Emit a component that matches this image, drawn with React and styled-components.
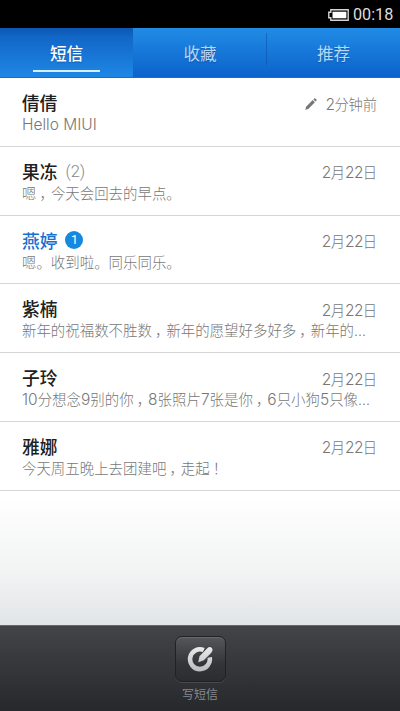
import React from "react";
import styled, { createGlobalStyle } from "styled-components";

const GlobalStyle = createGlobalStyle`
  * { box-sizing: border-box; }
  body { margin: 0; background: #000; }
`;

const Screen = styled.div`
  width: 400px;
  height: 711px;
  display: flex;
  flex-direction: column;
  overflow: hidden;
  font-family: "Noto Sans CJK SC", sans-serif;
  background: #fff;
`;

const StatusBar = styled.header`
  height: 28px;
  flex: none;
  display: flex;
  justify-content: flex-end;
  align-items: center;
  gap: 4px;
  padding: 2px 7px 0 0;
  background: #000;
  color: #dedede;
`;

const Clock = styled.span`
  font: 400 16.2px/20px Roboto, sans-serif;
  width: 40px;
  white-space: nowrap;
`;

const Tabs = styled.nav`
  height: 50px;
  flex: none;
  display: grid;
  grid-template-columns: 133px 134px 133px;
  background: linear-gradient(#218be5, #0b63cb);
  border-bottom: 1px solid #1c6dcb;
`;

const Tab = styled.button`
  border: 0;
  padding: 7px 0 0;
  display: flex;
  flex-direction: column;
  align-items: center;
  font: 500 16.6px/36px "Noto Sans CJK SC", sans-serif;
  color: ${(p) => (p.$active ? "#fff" : "#b5d8f6")};
  font-weight: ${(p) => (p.$active ? 500 : 400)};
  text-shadow: 0 1px 1px rgba(0, 40, 110, 0.35);
  background: ${(p) =>
    p.$active
      ? "linear-gradient(#0d57b2 0, #1268c9 10px, #1e87e5 100%)"
      : p.$divided
        ? "linear-gradient(rgba(6, 70, 160, 0.45), rgba(6, 70, 160, 0.45)) right 5px / 1px 32px no-repeat"
        : "none"};

  &::after {
    content: "";
    width: 67px;
    height: 2px;
    margin-top: -1px;
    background: ${(p) => (p.$active ? "#d5efff" : "transparent")};
  }
`;

const List = styled.main`
  flex: 1;
  display: flex;
  flex-direction: column;
  background: linear-gradient(#fff 0, #fff 420px, #f1f2f2 500px, #e1e5e7 547px);
`;

const Row = styled.article`
  height: 68.8px;
  flex: none;
  padding: 12px 23px 0 22px;
  border-bottom: 1px solid #d6d6d6;
  background: #fff;
`;

const Heading = styled.div`
  height: 24px;
  display: flex;
  align-items: center;
`;

const Name = styled.span`
  font-size: 17.7px;
  line-height: 24px;
  font-weight: 500;
  color: ${(p) => (p.$unread ? "#1771ce" : "#202020")};
`;

const Count = styled.span`
  margin: 3px 0 0 8px;
  font: 300 16.5px/20px Roboto, sans-serif;
  color: #888;
`;

const Badge = styled.span`
  width: 18px;
  height: 18px;
  margin-left: 8px;
  display: grid;
  place-items: center;
  border-radius: 50%;
  background: #1588e2;
  color: #fff;
  font: 400 12.5px/18px Roboto, sans-serif;
`;

const When = styled.time`
  margin: 3px 0 0 auto;
  display: flex;
  align-items: center;
  gap: 8px;
  font-size: 14.3px;
  line-height: 20px;
  font-weight: 300;
  color: #777;
  letter-spacing: -0.1px;
`;

const Preview = styled.p`
  margin: -2px 0 0;
  font-size: 14.45px;
  line-height: 24px;
  font-weight: 300;
  color: #777;
  white-space: nowrap;
`;

const Latin = styled.span`
  font-family: Inter, sans-serif;
  font-size: ${(p) => (p.$dots ? "14px" : "15.5px")};
  font-weight: 300;
  line-height: 1;

  ${When} & {
    letter-spacing: -0.6px;
  }
`;

const Punctuation = styled.span`
  display: inline-block;
  padding-left: 3px;
  width: 14.45px;
  font-feature-settings: "halt";
  line-height: 1;
`;

const Footer = styled.footer`
  height: 86px;
  flex: none;
  display: flex;
  flex-direction: column;
  align-items: center;
  padding-top: 10px;
  border-top: 1px solid #66696b;
  background: linear-gradient(#424448, #27282b);
`;

const Compose = styled.button`
  width: 51px;
  height: 46px;
  padding: 0;
  display: grid;
  place-items: center;
  border: 1px solid #202124;
  border-radius: 7px;
  background: linear-gradient(#55575a, #343538 60%, #2b2c2f);
  box-shadow: inset 0 1px 0 #68696c, 0 1px 0 #494a4d;
`;

const ComposeLabel = styled.span`
  margin-top: 3px;
  font-size: 12px;
  line-height: 18px;
  color: #88898c;
`;

function MixedText({ text }) {
  return text.split(/([\uFF0C\uFF01]|[A-Za-z0-9 ]+|…)/).filter(Boolean).map((part, i) => {
    if (/[\uFF0C\uFF01]/.test(part)) return <Punctuation key={i}>{part}</Punctuation>;
    if (part === "…") return <Latin key={i} $dots>...</Latin>;
    if (/^[A-Za-z0-9 ]+$/.test(part)) return <Latin key={i}>{part}</Latin>;
    return <React.Fragment key={i}>{part}</React.Fragment>;
  });
}

function BatteryIcon() {
  return (
    <svg width="21" height="12" viewBox="0 0 21 12" fill="none">
      <path d="M2.8.8H20.2V11.2H2.8V8.8H.8V3.2H2.8Z" stroke="#d6d6d6" strokeWidth="1.4" />
      <path d="M4.5 2.7H18.4V9.3H4.5Z" fill="#fff" />
    </svg>
  );
}

function PencilIcon() {
  return (
    <svg width="12" height="12" viewBox="0 0 12 12" fill="#777">
      <path d="M.3 11.7L1.1 8.7 7.7 2.1 9.9 4.3 3.3 10.9ZM8.4 1.4L9.2.6Q9.8 0 10.4.6L11.4 1.6Q12 2.2 11.4 2.8L10.6 3.6Z" />
    </svg>
  );
}

function ComposeIcon() {
  return (
    <svg width="26" height="26" viewBox="0 0 26 26" fill="none">
      <defs>
        <linearGradient id="silver" x1="0" y1="0" x2="0" y2="26" gradientUnits="userSpaceOnUse">
          <stop stopColor="#ededed" />
          <stop offset="1" stopColor="#b9babc" />
        </linearGradient>
      </defs>
      <path d="M16.8 4.1A9.9 9.9 0 1 0 22.7 11.4" stroke="url(#silver)" strokeWidth="4.6" />
      <path
        d="M11.3 16.3L12.5 10.3 20.3 2.3C21.8.8 23.5.7 24.7 1.8S25.8 5.1 24.3 6.7L16.8 14.2Z"
        fill="url(#silver)"
        stroke="#404245"
        strokeWidth="1.6"
        paintOrder="stroke"
      />
    </svg>
  );
}

const messages = [
  { name: "倩倩", text: "Hello MIUI", when: "2分钟前", draft: true },
  { name: "果冻", count: 2, text: "嗯\uFF0C今天会回去的早点。", when: "2月22日" },
  { name: "燕婷", unread: 1, text: "嗯。收到啦。同乐同乐。", when: "2月22日" },
  { name: "紫楠", text: "新年的祝福数不胜数\uFF0C新年的愿望好多好多\uFF0C新年的…", when: "2月22日" },
  { name: "子玲", text: "10分想念9别的你\uFF0C8张照片7张是你\uFF0C6只小狗5只像…", when: "2月22日" },
  { name: "雅娜", text: "今天周五晚上去团建吧\uFF0C走起\uFF01", when: "2月22日" },
];

export default function App() {
  return (
    <Screen>
      <GlobalStyle />
      <StatusBar>
        <BatteryIcon />
        <Clock>00:18</Clock>
      </StatusBar>
      <Tabs>
        <Tab $active>短信</Tab>
        <Tab $divided>收藏</Tab>
        <Tab>推荐</Tab>
      </Tabs>
      <List>
        {messages.map((m) => (
          <Row key={m.name}>
            <Heading>
              <Name $unread={Boolean(m.unread)}>{m.name}</Name>
              {m.count && <Count>({m.count})</Count>}
              {m.unread && <Badge>{m.unread}</Badge>}
              <When>
                {m.draft && <PencilIcon />}
                <span><MixedText text={m.when} /></span>
              </When>
            </Heading>
            <Preview><MixedText text={m.text} /></Preview>
          </Row>
        ))}
      </List>
      <Footer>
        <Compose aria-label="写短信"><ComposeIcon /></Compose>
        <ComposeLabel>写短信</ComposeLabel>
      </Footer>
    </Screen>
  );
}
